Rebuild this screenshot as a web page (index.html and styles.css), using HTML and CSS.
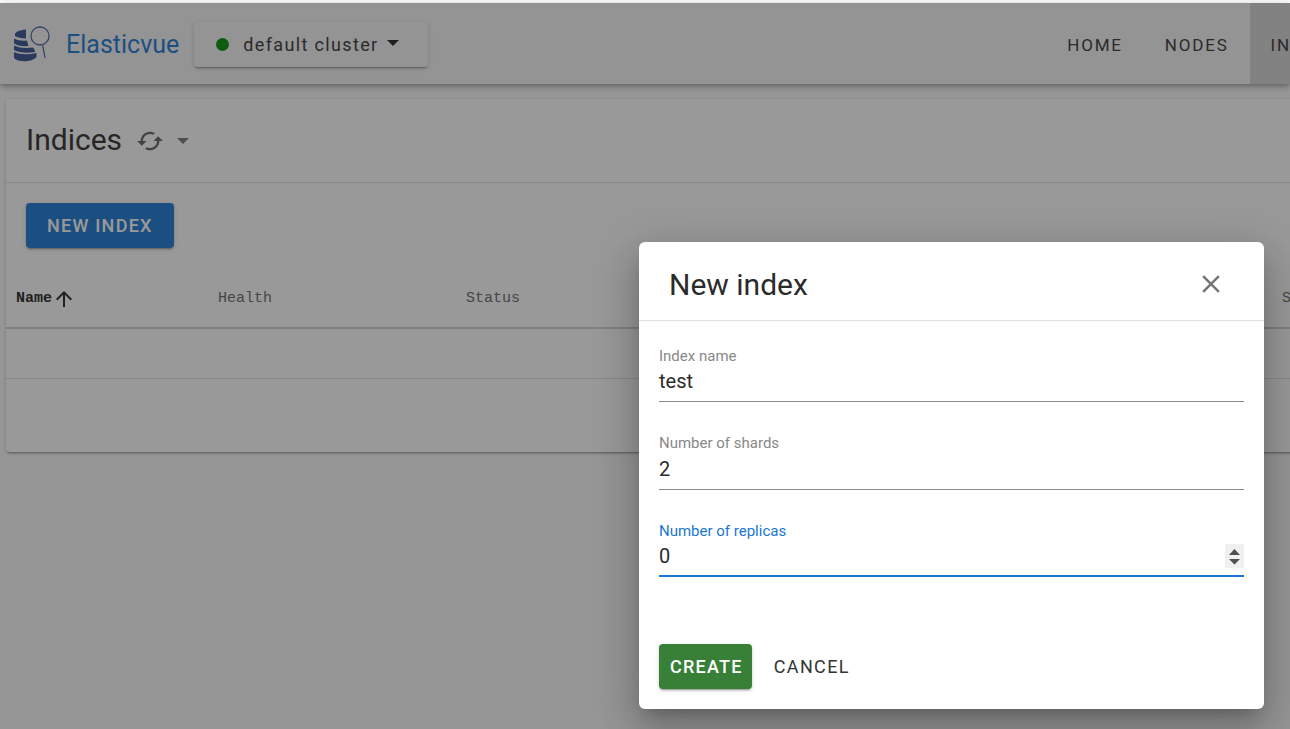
FILE: index.html
```html
<!DOCTYPE html>
<html lang="en">
<head>
<meta charset="UTF-8">
<meta name="viewport" content="width=device-width, initial-scale=1.0">
<link rel="stylesheet" href="styles.css">
<title>Elasticvue</title>
</head>
<body>
  <div class="app">
    <header class="toolbar">
      <svg class="logo" width="38" height="38" viewBox="0 0 38 38">
        <path fill="#34508f" d="M14 4.500 V13.500 C9 13.500 5 12.500 3 11 V8.500 C5 6 9 4.800 14 4.500 Z"/>
        <path fill="#34508f" d="M2 13.500 C6 15.500 10 16 15 15.500 L16.500 21 C10 21.500 5 20.500 2 18.500 Z"/>
        <path fill="#34508f" d="M2 20.500 C7 23 14 23.500 21 22.500 C22.500 24 23 25.500 23 27 C15 28.500 7 27.500 2 25 Z"/>
        <path fill="#34508f" d="M2 27 C7 29.500 16 30 24.500 28 V32 C20 37.500 6 37.500 2 33 Z"/>
        <circle cx="28" cy="11" r="9" fill="none" stroke="#46609f" stroke-width="1.300"/>
        <path d="M30.700 20.500 L33 33" fill="none" stroke="#46609f" stroke-width="1.300"/>
      </svg>
      <span class="brand">Elasticvue</span>
      <button class="cluster">
        <span class="dot"></span>
        <span>default cluster</span>
        <span class="caret"></span>
      </button>
      <nav class="nav">
        <a>Home</a>
        <a>Nodes</a>
        <a class="active">Indices</a>
      </nav>
    </header>

    <main class="card">
      <div class="card-title">
        <h2>Indices</h2>
        <svg class="reload" width="28" height="28" viewBox="0 0 24 24"><path fill="#616161" d="M19 8l-4 4h3c0 3.31-2.69 6-6 6-1.01 0-1.97-.25-2.8-.7l-1.46 1.46C8.97 19.54 10.43 20 12 20c4.42 0 8-3.58 8-8h3l-4-4zM6 12c0-3.31 2.69-6 6-6 1.01 0 1.97.25 2.8.7l1.46-1.46C15.03 4.46 13.57 4 12 4c-4.42 0-8 3.58-8 8H1l4 4 4-4H6z"/></svg>
        <span class="caret small"></span>
      </div>
      <div class="card-body">
        <button class="btn primary">New index</button>
      </div>
      <table class="table">
        <thead>
          <tr>
            <th class="sorted">Name<svg width="24" height="24" viewBox="0 0 24 24"><path fill="#212121" d="M4 12l1.41 1.41L11 7.83V20h2V7.83l5.58 5.59L20 12l-8-8-8 8z"/></svg></th>
            <th>Health</th>
            <th>Status</th>
            <th></th>
            <th>Shards</th>
          </tr>
        </thead>
        <tbody>
          <tr><td colspan="5"></td></tr>
          <tr class="last"><td colspan="5"></td></tr>
        </tbody>
      </table>
    </main>
  </div>

  <div class="overlay"></div>

  <div class="dialog">
    <div class="dialog-title">
      <h3>New index</h3>
      <svg width="30" height="30" viewBox="0 0 24 24"><path fill="#757575" d="M19 6.41L17.59 5 12 10.59 6.41 5 5 6.41 10.59 12 5 17.59 6.41 19 12 13.41 17.59 19 19 17.59 13.41 12z"/></svg>
    </div>
    <form class="dialog-form">
      <div class="field">
        <label>Index name</label>
        <div class="value">test</div>
      </div>
      <div class="field shards">
        <label>Number of shards</label>
        <div class="value">2</div>
      </div>
      <div class="field focused">
        <label>Number of replicas</label>
        <div class="value">0
          <span class="spinner">
            <svg width="19" height="24" viewBox="0 0 19 24"><path fill="#505050" d="M9.5 5 L15 11 H4 Z M4 15 H15 L9.5 20.500 Z"/></svg>
          </span>
        </div>
      </div>
      <div class="actions">
        <button type="button" class="btn success">Create</button>
        <button type="button" class="btn text">Cancel</button>
      </div>
    </form>
  </div>
</body>
</html>
```

FILE: styles.css
```css
* {
  box-sizing: border-box;
}

html, body {
  height: 100%;
}

body {
  margin: 0;
  padding-top: 3px;
  background-color: #fafafa;
  font-family: Roboto, sans-serif;
  color: #2b2b2b;
  overflow: hidden;
}

.app {
  width: 1290px;
}

.toolbar {
  display: flex;
  align-items: center;
  height: 81px;
  padding: 1px 0 0 12px;
  background-color: #f5f5f5;
  box-shadow: 0 2px 4px -1px rgba(0, 0, 0, 0.2), 0 4px 5px rgba(0, 0, 0, 0.14), 0 1px 10px rgba(0, 0, 0, 0.12);
}

.logo {
  flex: none;
  margin-right: 16px;
}

.brand {
  font-size: 25px;
  color: #1976d2;
  margin-right: 15px;
}

button {
  font-family: Roboto, sans-serif;
  border: none;
}

.cluster {
  display: flex;
  align-items: center;
  height: 45px;
  width: 234px;
  padding: 0 0 0 22px;
  background-color: #f5f5f5;
  border-radius: 4px;
  font-size: 18px;
  letter-spacing: 1.35px;
  color: #333;
  box-shadow: 0 3px 1px -2px rgba(0, 0, 0, 0.2), 0 2px 2px rgba(0, 0, 0, 0.14), 0 1px 5px rgba(0, 0, 0, 0.12);
}

.dot {
  width: 13px;
  height: 13px;
  margin-right: 14px;
  border-radius: 50%;
  background-color: #008f00;
}

.caret {
  width: 0;
  height: 0;
  margin-left: 9px;
  margin-bottom: 2px;
  border-left: 6px solid transparent;
  border-right: 6px solid transparent;
  border-top: 6px solid #212121;
}

.caret.small {
  margin-left: 13px;
  margin-bottom: 0;
  border-left-width: 6.5px;
  border-right-width: 6.5px;
  border-top: 6px solid #757575;
}

.nav {
  display: flex;
  align-self: stretch;
  margin: -1px -77.5px 0 auto;
}

.nav a {
  display: flex;
  align-items: center;
  padding: 2px 21px 0;
  font-size: 17px;
  letter-spacing: 1.8px;
  color: #333;
  text-transform: uppercase;
}

.nav a.active {
  background-color: #d4d4d4;
}

.card {
  margin: 15px 0 0 6px;
  width: 1300px;
  background-color: #fff;
  border-radius: 4px;
  box-shadow: 0 3px 1px -2px rgba(0, 0, 0, 0.2), 0 2px 2px rgba(0, 0, 0, 0.14), 0 1px 5px rgba(0, 0, 0, 0.12);
}

.card-title {
  display: flex;
  align-items: center;
  height: 84px;
  padding-left: 20px;
  border-bottom: 1px solid #e0e0e0;
}

.card-title h2 {
  margin: 0 14px 2px 0;
  font-size: 30px;
  font-weight: 400;
}

.card-body {
  padding: 20px;
}

.btn {
  height: 45px;
  padding: 0 21px;
  border-radius: 4px;
  font-size: 18px;
  font-weight: 500;
  letter-spacing: 1.25px;
  text-transform: uppercase;
}

.btn.primary {
  background-color: #1976d2;
  color: #fff;
  box-shadow: 0 3px 1px -2px rgba(0, 0, 0, 0.2), 0 2px 2px rgba(0, 0, 0, 0.14), 0 1px 5px rgba(0, 0, 0, 0.12);
}

.table {
  width: 100%;
  border-collapse: collapse;
  table-layout: fixed;
  font-family: "Liberation Mono", "Noto Sans CJK SC", monospace;
}

.table th {
  height: 60px;
  padding: 2px 0 0 10px;
  text-align: left;
  font-size: 15px;
  font-weight: 400;
  color: #666;
  border-bottom: 2px solid #d0d0d0;
}

.table th:nth-child(1) {
  width: 202px;
}

.table th:nth-child(2) {
  width: 248px;
}

.table th:nth-child(3) {
  width: 400px;
}

.table th:nth-child(4) {
  width: 416px;
}

.table th.sorted {
  color: #212121;
  font-weight: 700;
}

.table th svg {
  margin: -6px 0;
  vertical-align: -3px;
}

.table td {
  height: 50px;
  border-bottom: 1px solid #e0e0e0;
}

.table tr.last td {
  height: 74px;
  border-bottom: none;
}

.overlay {
  position: absolute;
  inset: 3px 0 0 0;
  background-color: rgba(33, 33, 33, 0.46);
}

.dialog {
  position: absolute;
  left: 639px;
  top: 242px;
  width: 625px;
  height: 467px;
  background-color: #fff;
  border-radius: 6px;
  box-shadow: 0 11px 15px -7px rgba(0, 0, 0, 0.2), 0 24px 38px 3px rgba(0, 0, 0, 0.14), 0 9px 46px 8px rgba(0, 0, 0, 0.12);
}

.dialog-title {
  display: flex;
  align-items: center;
  justify-content: space-between;
  height: 79px;
  padding: 6px 38px 0 30px;
  border-bottom: 1px solid #e0e0e0;
}

.dialog-title h3 {
  margin: 0;
  font-size: 30px;
  font-weight: 400;
}

.dialog-form {
  padding: 27px 20px 0;
}

.field {
  height: 87.5px;
}

.field:first-child {
  height: 87px;
}

.field.shards {
  height: 88px;
}

.field label {
  display: block;
  height: 17px;
  font-size: 15px;
  line-height: 17px;
  color: #888;
}

.field.shards label {
  height: 17.5px;
}

.value {
  display: flex;
  align-items: center;
  justify-content: space-between;
  height: 37px;
  padding-bottom: 4px;
  font-size: 20px;
  border-bottom: 1px solid #8a8a8a;
}

.field.focused label {
  color: #1976d2;
}

.field.focused .value {
  border-bottom: 2px solid #1976d2;
}

.spinner {
  display: flex;
  align-items: center;
  height: 24px;
  background-color: #f0f0f0;
}

.actions {
  display: flex;
  margin-top: 33px;
}

.btn.success {
  padding: 0 9px 0 11px;
  background-color: #388038;
  color: #fff;
  box-shadow: 0 3px 1px -2px rgba(0, 0, 0, 0.2), 0 2px 2px rgba(0, 0, 0, 0.14), 0 1px 5px rgba(0, 0, 0, 0.12);
}

.btn.text {
  background: none;
  padding: 0 22px;
  font-weight: 400;
  letter-spacing: 1.35px;
  color: #333;
}
```
